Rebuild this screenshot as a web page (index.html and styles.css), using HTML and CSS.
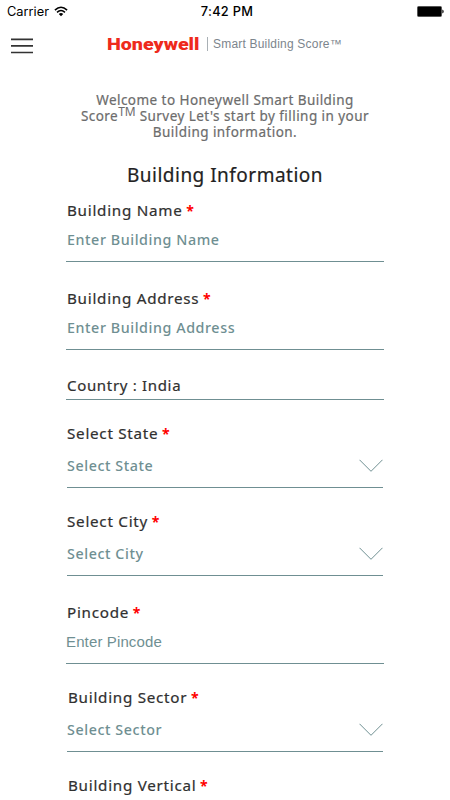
FILE: index.html
```html
<!DOCTYPE html>
<html lang="en">
<head>
<meta charset="utf-8">
<title>Smart Building Score</title>
<link rel="stylesheet" href="styles.css">
</head>
<body>
<div class="status">
  <div class="carrier"><span>Carrier</span>
    <svg width="14" height="11" viewBox="0 0 14 11" fill="none" stroke="#000" stroke-width="1.5"><path d="M.9 4.1Q7-1.7 13.1 4.1M3 6.4Q7 2.7 11 6.4"/><path d="M4.8 8Q7 6.1 9.2 8L7 10.3z" fill="#000" stroke="none"/></svg>
  </div>
  <div class="time">7:42 PM</div>
  <svg class="battery" width="27" height="11" viewBox="0 0 27 11"><rect x=".5" y=".5" width="24" height="10" rx="1" fill="#000" stroke="#555"/><path d="M25 3.5q2 .4 2 2t-2 2z" fill="#555"/></svg>
</div>
<header class="header">
  <svg class="menu" width="22" height="16" viewBox="0 0 22 16" stroke="#333" stroke-width="1.7"><path d="M0 1.3h22M0 7.8h22M0 14.5h22"/></svg>
  <div class="brand">Honeywell</div>
  <div class="product">Smart Building Score™</div>
</header>
<main>
  <p class="welcome">Welcome to Honeywell Smart Building<br>Score<sup>TM</sup> Survey Let's start by filling in your<br>Building information.</p>
  <h1>Building Information</h1>
  <form class="form">
    <div class="field"><div class="label">Building Name <b>*</b></div><div class="value">Enter Building Name</div></div>
    <div class="field"><div class="label">Building Address <b>*</b></div><div class="value">Enter Building Address</div></div>
    <div class="country">Country : India</div>
    <div class="field select"><div class="label">Select State <b>*</b></div><div class="value"><span>Select State</span><svg width="24" height="14" viewBox="0 0 24 14"><path d="M.5.8 12 12.3 23.5.8"/></svg></div></div>
    <div class="field select"><div class="label">Select City <b>*</b></div><div class="value"><span>Select City</span><svg width="24" height="14" viewBox="0 0 24 14"><path d="M.5.8 12 12.3 23.5.8"/></svg></div></div>
    <div class="field"><div class="label">Pincode <b>*</b></div><div class="value plain">Enter Pincode</div></div>
    <div class="field select sector"><div class="label">Building Sector <b>*</b></div><div class="value"><span>Select Sector</span><svg width="24" height="14" viewBox="0 0 24 14"><path d="M.5.8 12 12.3 23.5.8"/></svg></div></div>
    <div class="last"><div class="label">Building Vertical <b>*</b></div></div>
  </form>
</main>
</body>
</html>
```
FILE: styles.css
```css
* { box-sizing: border-box; }
body { margin: 0; background: #fff; font-family: "Noto Sans", sans-serif; color: #303030; }
svg { display: block; flex: none; }

.status { display: grid; grid-template-columns: 1fr auto 1fr; align-items: center; height: 23px; padding: 0 6px 0 7px; font: 12.8px/23px Inter, sans-serif; color: #000; }
.carrier { display: flex; align-items: center; gap: 5px; height: 21px; line-height: 21px; }
.time { padding-left: 3px; font-weight: 500; letter-spacing: .3px; }
.battery { justify-self: end; }

.header { display: flex; align-items: center; height: 44px; padding-left: 11px; }
.menu { margin: 2px 74px 0 0; }
.brand { width: 92px; font: 900 16.5px/20px Roboto, sans-serif; color: #ee2a1c; white-space: nowrap; transform: scaleX(1.19); transform-origin: 0 50%; }
.product { margin: -2px 0 0 8px; padding-left: 5px; border-left: 1px solid #a9b0b5; font: 12px/14px "Liberation Sans", sans-serif; letter-spacing: .2px; color: #7c858d; }

.welcome { margin: 25px 0 0; text-align: center; font-size: 13.5px; font-weight: 400; line-height: 16px; letter-spacing: .45px; color: #6c6c6c; white-space: nowrap; -webkit-text-stroke: .2px; }
.welcome sup { font-size: 12px; line-height: 0; vertical-align: 5px; letter-spacing: 0; -webkit-text-stroke: 0; }
h1 { margin: 21px 0 0; text-align: center; font-size: 19px; font-weight: 400; line-height: 28px; letter-spacing: .48px; color: #222; -webkit-text-stroke: .2px; }

.form { width: 318px; margin: 9px 0 0 66px; }
.field { height: 64px; margin-bottom: 24px; border-bottom: 1px solid #6f8f92; }
.label { height: 24px; padding-left: 1px; font-size: 15.2px; font-weight: 400; line-height: 24px; letter-spacing: .74px; white-space: nowrap; -webkit-text-stroke: .2px; }
.label b { margin-left: -1px; font-size: 14px; font-weight: 700; color: #f00; letter-spacing: 0; line-height: 1; -webkit-text-stroke: 0; }
.value { display: flex; align-items: center; height: 34px; padding-left: 1px; font-size: 14.3px; font-weight: 500; letter-spacing: .57px; color: #6f8f92; }
.plain { padding-left: 0; font: 15px "Liberation Sans", sans-serif; letter-spacing: .13px; }
.country { height: 26px; margin: 0 0 21px; padding-left: 1px; border-bottom: 1px solid #6f8f92; font-size: 15px; font-weight: 400; line-height: 23px; letter-spacing: .68px; -webkit-text-stroke: .2px; }
.select { width: 316px; height: 67px; margin: 0 0 21px 1px; }
.select .label, .select .value { padding-left: 0; }
.select .value { height: 40px; justify-content: space-between; }
.select path { fill: none; stroke: #6f8f92; stroke-width: 1; }
.select svg { margin-top: 2px; }
.select + .field:not(.select) { margin-top: 24px; margin-bottom: 21px; }
.sector .label { padding-left: 1px; }
.last { margin-left: 2px; }
.last .label { padding-left: 0; }
```
